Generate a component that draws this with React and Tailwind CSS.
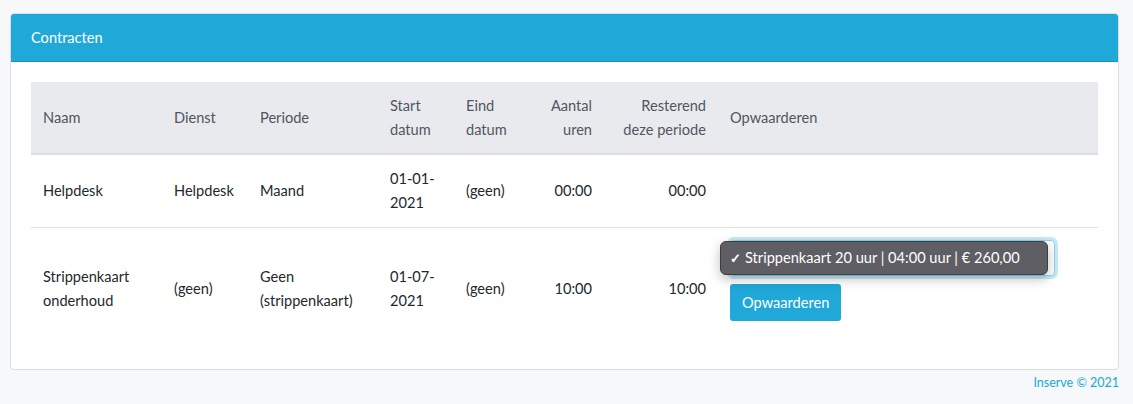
import React from 'react';

const contracts = [
  { name: ['Helpdesk'], service: 'Helpdesk', period: ['Maand'], start: ['01-01-', '2021'], end: '(geen)', hours: '00:00', left: '00:00', upgrade: false },
  { name: ['Strippenkaart', 'onderhoud'], service: '(geen)', period: ['Geen', '(strippenkaart)'], start: ['01-07-', '2021'], end: '(geen)', hours: '10:00', left: '10:00', upgrade: true },
];

function Lines({ items }) {
  return items.map((t, i) => <div key={i}>{t}</div>);
}

function UpgradeForm() {
  return (
    <div className="pb-4">
      <div className="relative w-[325px]">
        {/* select with focus ring */}
        <div className="h-[36px] rounded-[4px] border border-[#8ad4ee] shadow-[0_0_0_3px_rgba(32,168,216,0.25)] bg-white flex items-center justify-end pr-2">
          <span className="text-[9px] text-[#555]">▾</span>
        </div>
        {/* native option popup */}
        <div className="absolute left-[-10px] top-[1px] w-[328px] h-[34px] rounded-[6px] bg-[#5f5e64] border border-[#3e3d42] shadow-[0_4px_12px_rgba(0,0,0,0.25)] flex items-center pl-[9px] text-white text-[14.6px]">
          <span className="mr-1 text-[13px] font-bold">✓</span>
          Strippenkaart 20 uur | 04:00 uur | € 260,00
        </div>
      </div>
      <button className="mt-[8px] h-[37px] px-3 rounded-[3px] bg-[#20a8d8] text-white text-[14.6px]">Opwaarderen</button>
    </div>
  );
}

export default function App() {
  return (
    <div className="min-h-[404px] bg-[#f7f8fa] pt-[13px] px-[10px] text-[14.6px] leading-[24px]" style={{ fontFamily: 'Lato, "Noto Sans", sans-serif' }}>
      <div className="w-[1109px] bg-white border border-[#dadde2] rounded-[4px] overflow-hidden">
        <div className="h-[48px] bg-[#20a8d8] border-b border-[#1a8fb8] flex items-center px-[20px] text-white">Contracten</div>
        <div className="p-[20px]">
          <table className="w-full table-fixed border-collapse text-[#23282c]">
            <thead className="bg-[#e9eaee] text-[#4f5660]">
              <tr className="h-[72px] border-b-2 border-[#dcdee3]">
                <th className="w-[131px] px-3 text-left font-normal">Naam</th>
                <th className="w-[86px] px-3 text-left font-normal">Dienst</th>
                <th className="w-[130px] px-3 text-left font-normal">Periode</th>
                <th className="w-[76px] px-3 text-left font-normal">Start<br />datum</th>
                <th className="w-[76px] px-3 text-left font-normal">Eind<br />datum</th>
                <th className="w-[74px] px-3 text-right font-normal">Aantal<br />uren</th>
                <th className="w-[114px] px-3 text-right font-normal">Resterend<br />deze periode</th>
                <th className="px-3 text-left font-normal">Opwaarderen</th>
              </tr>
            </thead>
            <tbody>
              {contracts.map((c, i) => (
                <tr key={i} className={i > 0 ? 'border-t border-[#dfe1e5]' : ''}>
                  <td className="px-3 py-3 h-[70px] align-middle"><Lines items={c.name} /></td>
                  <td className="px-3 py-3 align-middle">{c.service}</td>
                  <td className="px-3 py-3 align-middle"><Lines items={c.period} /></td>
                  <td className="px-3 py-3 align-middle"><Lines items={c.start} /></td>
                  <td className="px-3 py-3 align-middle">{c.end}</td>
                  <td className="px-3 py-3 align-middle text-right">{c.hours}</td>
                  <td className="px-3 py-3 align-middle text-right">{c.left}</td>
                  <td className="px-3 py-3 align-middle">{c.upgrade && <UpgradeForm />}</td>
                </tr>
              ))}
            </tbody>
          </table>
        </div>
      </div>
      <div className="w-[1109px] text-right text-[12.5px] text-[#20a8d8] mt-[1px]">Inserve © 2021</div>
    </div>
  );
}
